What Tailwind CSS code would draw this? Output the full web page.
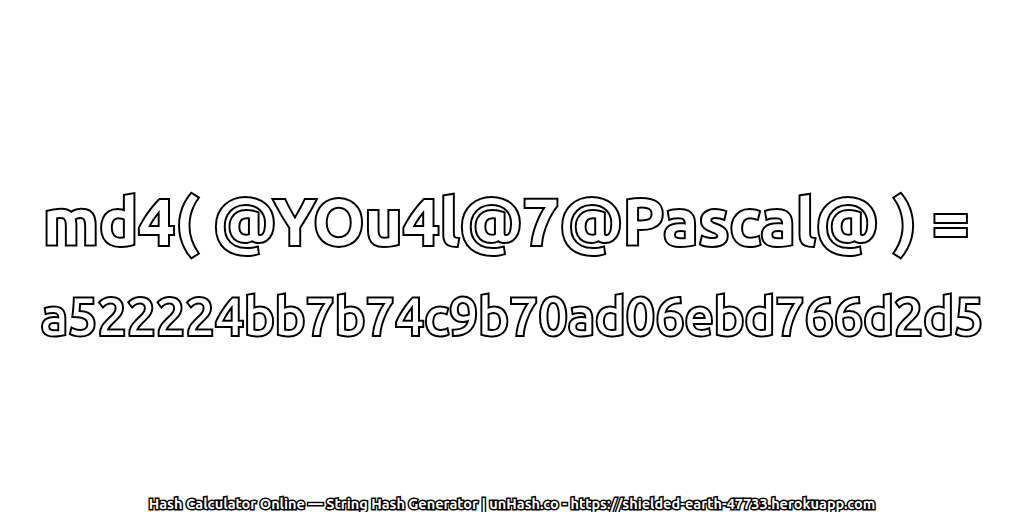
<!DOCTYPE html>
<html lang="en">
<head>
  <meta charset="UTF-8">
  <title>unHash</title>
  <script src="https://cdn.jsdelivr.net/npm/@tailwindcss/browser@4"></script>
</head>
<body class="bg-white">
  <div class="relative flex flex-col items-center w-[1024px] h-[512px] overflow-hidden font-['Ubuntu','Noto_Sans',sans-serif]">
    <div class="flex flex-col items-center mt-[174px] text-white [-webkit-text-stroke:4px_#000] [paint-order:stroke_fill]">
      <div class="text-[65.4px] leading-[94px] font-bold whitespace-nowrap pr-[12px]">md4( @YOu4l@7@Pascal@ ) =</div>
      <div class="text-[52px] leading-[96px] font-medium whitespace-nowrap">a522224bb7b74c9b70ad06ebd766d2d5</div>
    </div>
    <div class="absolute bottom-0 w-full text-center text-[14.5px] leading-[16px] text-white font-bold [-webkit-text-stroke:3px_#000] [paint-order:stroke_fill] whitespace-nowrap">Hash Calculator Online — String Hash Generator | unHash.co - https://shielded-earth-47733.herokuapp.com</div>
  </div>
</body>
</html>
